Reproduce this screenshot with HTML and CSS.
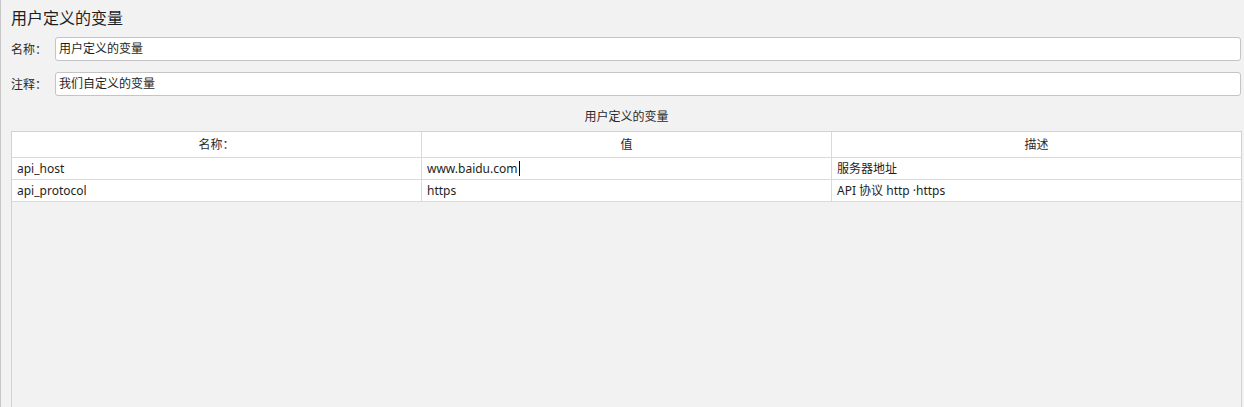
FILE: index.html
```html
<!DOCTYPE html>
<html lang="zh-CN">
<head>
    <meta charset="UTF-8">
    <title>用户定义的变量</title>
    <link rel="stylesheet" href="styles.css">
</head>
<body>
<div class="panel">
    <!--标题-->
    <h1 class="title">用户定义的变量</h1>

    <!--名称 / 注释-->
    <div class="field">
        <label class="label">名称：</label>
        <div class="input">用户定义的变量</div>
    </div>
    <div class="field second">
        <label class="label">注释：</label>
        <div class="input">我们自定义的变量</div>
    </div>

    <p class="caption">用户定义的变量</p>

    <!--变量表格-->
    <div class="pane">
        <div class="row head">
            <div class="cell">名称：</div>
            <div class="cell">值</div>
            <div class="cell">描述</div>
        </div>
        <div class="row">
            <div class="cell">api_host</div>
            <div class="cell">www.baidu.com<span class="caret"></span></div>
            <div class="cell">服务器地址</div>
        </div>
        <div class="row">
            <div class="cell">api_protocol</div>
            <div class="cell">https</div>
            <div class="cell">API 协议 http ·https</div>
        </div>
    </div>
</div>
</body>
</html>
```

FILE: styles.css
```css
*{
    margin: 0;
    padding: 0;
    box-sizing: border-box;
}
html, body{
    background-color: #f2f2f2;
}
body{
    font-family: "Noto Sans", "Noto Sans CJK SC", sans-serif;
    color: #1e1e1e;
    overflow: hidden;
}
.panel{
    height: 407px;
    border-left: 1px solid #c8c8c8;
    padding: 8px 2px 0 10px;
    display: flex;
    flex-direction: column;
}
.title{
    font-size: 16px;
    font-weight: normal;
    line-height: 20px;
}

.field{
    display: flex;
    align-items: center;
    margin-top: 9px;
    margin-right: 1px;
}
.field.second{
    margin-top: 11px;
}
.label{
    width: 44px;
    font-size: 12px;
    color: #2a2a2a;
}
.input{
    flex: 1;
    height: 24px;
    line-height: 22px;
    padding-left: 3px;
    font-size: 12px;
    background-color: #fff;
    border: 1px solid #c4c4c4;
    border-radius: 3px;
}

.caption{
    margin-top: 12px;
    font-size: 12px;
    line-height: 18px;
    text-align: center;
    color: #2a2a2a;
}

.pane{
    flex: 1;
    margin-top: 5px;
    border: 1px solid #d2d2d2;
    border-bottom: none;
}
.row{
    display: flex;
    height: 22px;
    background-color: #fff;
    border-bottom: 1px solid #dadada;
}
.row.head{
    height: 26px;
}
.cell{
    flex: 1 1 0;
    padding-left: 5px;
    font-size: 12px;
    line-height: 21px;
    white-space: nowrap;
    border-right: 1px solid #dadada;
}
.cell:last-child{
    border-right: none;
}
.head .cell{
    text-align: center;
    padding-left: 0;
    line-height: 25px;
    color: #2a2a2a;
}
.caret{
    display: inline-block;
    width: 1px;
    height: 15px;
    margin-left: 1px;
    vertical-align: -3px;
    background-color: #000;
}
```
